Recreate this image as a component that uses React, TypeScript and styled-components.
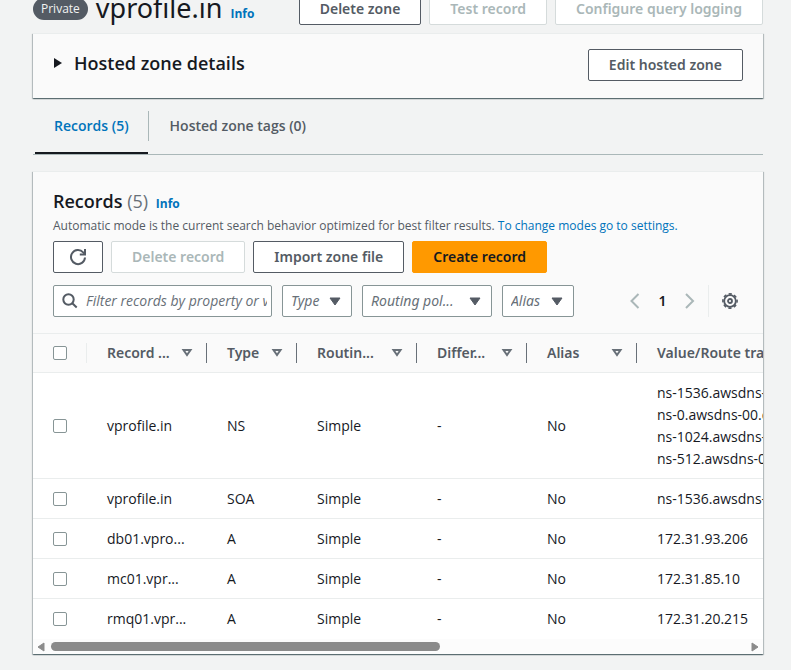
import React from "react";
import styled, { createGlobalStyle, css } from "styled-components";

const c = {
  page: "#f2f3f3",
  panel: "#fafafa",
  line: "#eaeded",
  ink: "#16191f",
  slate: "#545b64",
  grey: "#687078",
  disabled: "#aab7b8",
  disabledLine: "#d5dbdb",
  field: "#879596",
  link: "#0073bb",
};

const narrow = `"Open Sans", "Noto Sans", sans-serif`;

const GlobalStyle = createGlobalStyle`
  *, *::before, *::after { box-sizing: border-box; }
  body {
    margin: 0;
    overflow-x: hidden;
    background: ${c.page};
    color: ${c.ink};
    font: 400 14px/22px "Noto Sans", "Open Sans", sans-serif;
  }
  button, input, select { font: inherit; }
  h1, h2, p { margin: 0; }
`;

const Page = styled.main`
  padding: 0 28px 15px 33px;
`;

const ZoneHeader = styled.header`
  display: flex;
  align-items: center;
  justify-content: space-between;
  height: 32px;
  margin: -7px 0 8px;
`;

const ZoneTitle = styled.div`
  display: flex;
  align-items: center;
  gap: 8px;
`;

const Badge = styled.span`
  padding: 0 8px;
  border-radius: 11px;
  background: ${c.slate};
  color: ${c.page};
  font-family: ${narrow};
  font-size: 12px;
  line-height: 22px;
`;

const ZoneHeading = styled.div`
  display: flex;
  align-items: baseline;
  gap: 8px;
`;

const ZoneName = styled.h1`
  font-size: 27px;
  font-weight: 400;
  line-height: 28px;
`;

const Link = styled.a<{ $bold?: boolean }>`
  color: ${c.link};
  font-family: ${narrow};
  font-size: 12px;
  font-weight: ${(p) => (p.$bold ? 700 : 400)};
  text-decoration: none;
`;

const Actions = styled.div`
  display: flex;
  flex-shrink: 0;
  gap: 8px;
`;

const Button = styled.button<{ $primary?: boolean }>`
  display: inline-flex;
  align-items: center;
  justify-content: center;
  height: 32px;
  padding: 0 20px;
  border: 1px solid ${c.slate};
  border-radius: 2px;
  background: #fff;
  color: ${c.slate};
  font-weight: 600;
  white-space: nowrap;
  cursor: pointer;
  &:disabled {
    border-color: ${c.disabledLine};
    color: ${c.disabled};
    cursor: default;
  }
  ${(p) =>
    p.$primary &&
    css`
      border-color: #ff9900;
      background: #ff9900;
      color: ${c.ink};
    `}
`;

const RefreshButton = styled(Button)`
  width: 50px;
  padding: 0;
`;

const Panel = styled.section`
  background: ${c.panel};
  border-top: 1px solid ${c.line};
  box-shadow: 0 1px 1px rgba(0, 28, 36, 0.4), 1px 1px 1px rgba(0, 28, 36, 0.2),
    -1px 1px 1px rgba(0, 28, 36, 0.2);
`;

const DetailsPanel = styled(Panel)`
  display: flex;
  align-items: flex-start;
  justify-content: space-between;
  padding: 15px 20px 17px;
`;

const Expander = styled.button`
  display: flex;
  align-items: center;
  gap: 12px;
  padding: 0 0 0 1px;
  border: 0;
  background: none;
  color: ${c.ink};
  font-family: ${narrow};
  font-size: 18px;
  font-weight: 600;
  line-height: 28px;
  cursor: pointer;
`;

const Tabs = styled.div`
  display: flex;
  margin: 13px 0 16px;
  border-bottom: 1px solid ${c.disabled};
`;

const Tab = styled.button<{ $active?: boolean }>`
  display: flex;
  flex-direction: column;
  gap: 11px;
  padding: 0 0 0 2px;
  border: 0;
  background: none;
  color: ${(p) => (p.$active ? c.link : c.slate)};
  font-family: ${narrow};
  font-weight: 600;
  cursor: pointer;
  &::after {
    content: "";
    width: calc(100% - 1px);
    height: 2px;
    background: ${(p) => (p.$active ? c.ink : "transparent")};
  }
`;

const TabLabel = styled.span<{ $divided?: boolean }>`
  padding: 0 19px;
  border-right: 1px solid ${(p) => (p.$divided ? c.disabled : "transparent")};
  line-height: 30px;
`;

const RecordsHead = styled.div`
  padding: 18px 20px 16px;
`;

const Heading = styled.h2`
  font-family: ${narrow};
  font-size: 18px;
  font-weight: 600;
  line-height: 22px;
  & > a {
    margin-left: 3px;
  }
`;

const Count = styled.span`
  color: ${c.grey};
  font-weight: 400;
`;

const Description = styled.p`
  margin: 0 0 4px;
  color: ${c.slate};
  font-family: ${narrow};
  font-size: 12px;
  white-space: nowrap;
`;

const Filters = styled.div`
  display: flex;
  gap: 10px;
  margin-top: 12px;
`;

const field = css`
  display: flex;
  align-items: center;
  height: 32px;
  border: 1px solid ${c.field};
  border-radius: 2px;
  background: #fff;
`;

const SearchBox = styled.label`
  ${field}
  flex: 1;
  min-width: 0;
  gap: 8px;
  padding: 0 4px 0 8px;
  & > svg {
    flex-shrink: 0;
  }
`;

const SearchInput = styled.input`
  flex: 1;
  min-width: 0;
  padding: 0;
  border: 0;
  outline: 0;
  background: none;
  color: ${c.ink};
  font-family: ${narrow};
  &::placeholder {
    color: ${c.grey};
    font-style: italic;
    opacity: 1;
  }
`;

const SelectBox = styled.span<{ $width: number }>`
  ${field}
  flex: 0 0 ${(p) => p.$width}px;
  padding: 0 10px 0 8px;
  & > svg {
    flex-shrink: 0;
    pointer-events: none;
  }
`;

const Select = styled.select`
  flex: 1;
  min-width: 0;
  padding: 0;
  border: 0;
  outline: 0;
  appearance: none;
  background: none;
  color: ${c.grey};
  font-style: italic;
`;

const Pager = styled.nav`
  display: flex;
  align-items: center;
  margin-left: 41px;
`;

const IconButton = styled.button`
  display: flex;
  align-items: center;
  justify-content: center;
  width: 20px;
  height: 32px;
  padding: 0;
  border: 0;
  background: none;
  cursor: pointer;
`;

const PageNumber = styled.button`
  width: 35px;
  padding: 0;
  border: 0;
  background: none;
  color: ${c.ink};
  font-weight: 600;
`;

const Settings = styled.div`
  display: flex;
  margin-left: 8px;
  padding: 0 3px 0 11px;
  border-left: 1px solid ${c.line};
`;

const TableScroll = styled.div`
  overflow: hidden;
  background: #fff;
`;

const Table = styled.table`
  width: 1310px;
  border-collapse: separate;
  border-spacing: 0;
  table-layout: fixed;
`;

const Col = styled.col<{ $width?: number }>`
  width: ${(p) => (p.$width ? `${p.$width}px` : "auto")};
`;

const Th = styled.th`
  padding: 9px 0;
  border-top: 1px solid ${c.line};
  border-bottom: 1px solid ${c.line};
  background: ${c.panel};
  color: ${c.slate};
  font-weight: 600;
  text-align: left;
`;

const ThInner = styled.div<{ $faint?: boolean }>`
  display: flex;
  align-items: center;
  justify-content: space-between;
  height: 20px;
  padding: 0 13px 0 20px;
  border-right: 1px solid ${(p) => (p.$faint ? c.line : c.grey)};
  white-space: nowrap;
`;

const Td = styled.td`
  padding: 9px 20px 8px;
  border-bottom: 1px solid ${c.line};
  font-family: ${narrow};
  white-space: nowrap;
  tr:last-child > & {
    border-bottom-color: transparent;
  }
`;

const Checkbox = styled.input`
  display: block;
  width: 14px;
  height: 14px;
  margin: 0;
  appearance: none;
  border: 1px solid ${c.field};
  border-radius: 2px;
  background: #fff;
  &:checked {
    background: ${c.link};
  }
`;

const ScrollBar = styled.div`
  display: flex;
  align-items: center;
  gap: 6px;
  height: 15px;
  padding: 0 4px;
  background: #fcfcfc;
`;

const Track = styled.div`
  flex: 1;
`;

const Thumb = styled.div`
  width: 56%;
  height: 9px;
  border-radius: 5px;
  background: #8b8b8b;
`;

const ScrollArrow = ({ left }: { left?: boolean }) => (
  <svg width="8" height="10" viewBox="0 0 8 10" aria-hidden="true">
    <path d={left ? "M7 1v8L1 5z" : "M1 1v8l6-4z"} fill="#8b8b8b" stroke="#8b8b8b" strokeLinejoin="round" />
  </svg>
);

const CaretDown = () => (
  <svg width="12" height="9" viewBox="0 0 12 9" aria-hidden="true">
    <path d="M1 1h10L6 8z" fill={c.slate} stroke={c.slate} strokeLinejoin="round" />
  </svg>
);

const SortIcon = () => (
  <svg width="12" height="10" viewBox="0 0 12 10" aria-hidden="true">
    <path d="M2.5 2h7L6 7z" fill="none" stroke={c.grey} strokeWidth="2" />
  </svg>
);

const Chevron = ({ left }: { left?: boolean }) => (
  <svg width="10" height="16" viewBox="0 0 10 16" aria-hidden="true">
    <path d={left ? "M8.5 1l-7 7 7 7" : "M1 1l7 7-7 7"} fill="none" stroke={c.disabled} strokeWidth="2" />
  </svg>
);

const RefreshIcon = () => (
  <svg width="18" height="18" viewBox="0 0 18 18" fill="none" stroke={c.slate} strokeWidth="2" aria-hidden="true">
    <path d="M16 9.5A7 7 0 1 1 14.2 4.4L16 6" />
    <path d="M16 1v5.5h-5.2" />
  </svg>
);

const SearchIcon = () => (
  <svg width="16" height="16" viewBox="0 0 16 16" fill="none" stroke={c.slate} strokeWidth="2" aria-hidden="true">
    <circle cx="6.5" cy="6.5" r="5.2" />
    <path d="M10.3 10.3l4.4 4.2" />
  </svg>
);

const GearIcon = () => (
  <svg width="16" height="16" viewBox="0 0 16 16" fill="none" stroke={c.slate} aria-hidden="true">
    <circle cx="8" cy="8" r="5.8" strokeWidth="1.8" />
    <circle cx="8" cy="8" r="7.1" strokeWidth="1.6" strokeDasharray="3.2 2.376" strokeDashoffset="1.6" />
    <circle cx="8" cy="8" r="2" strokeWidth="1.8" />
  </svg>
);

const columns = [
  { label: "Record ...", width: 120 },
  { label: "Type", width: 90 },
  { label: "Routin...", width: 120 },
  { label: "Differ...", width: 110 },
  { label: "Alias", width: 110 },
];

const records = [
  {
    name: "vprofile.in",
    type: "NS",
    values: ["ns-1536.awsdns-00.co.uk.", "ns-0.awsdns-00.com.", "ns-1024.awsdns-00.org.", "ns-512.awsdns-00.net."],
  },
  { name: "vprofile.in", type: "SOA", values: ["ns-1536.awsdns-00.co.uk."] },
  { name: "db01.vpro...", type: "A", values: ["172.31.93.206"] },
  { name: "mc01.vpr...", type: "A", values: ["172.31.85.10"] },
  { name: "rmq01.vpr...", type: "A", values: ["172.31.20.215"] },
];

const filters = [
  { label: "Type", width: 70 },
  { label: "Routing pol...", width: 130 },
  { label: "Alias", width: 72 },
];

export default function App() {
  return (
    <>
      <GlobalStyle />
      <Page>
        <ZoneHeader>
          <ZoneTitle>
            <Badge>Private</Badge>
            <ZoneHeading>
              <ZoneName>vprofile.in</ZoneName>
              <Link $bold href="#zone-info">Info</Link>
            </ZoneHeading>
          </ZoneTitle>
          <Actions>
            <Button>Delete zone</Button>
            <Button disabled>Test record</Button>
            <Button disabled>Configure query logging</Button>
          </Actions>
        </ZoneHeader>

        <DetailsPanel>
          <Expander aria-expanded="false">
            <svg width="8" height="10" viewBox="0 0 8 10" aria-hidden="true">
              <path d="M0 0v10l8-5z" fill={c.ink} />
            </svg>
            Hosted zone details
          </Expander>
          <Button>Edit hosted zone</Button>
        </DetailsPanel>

        <Tabs role="tablist">
          <Tab role="tab" aria-selected="true" $active>
            <TabLabel $divided>Records (5)</TabLabel>
          </Tab>
          <Tab role="tab" aria-selected="false">
            <TabLabel>Hosted zone tags (0)</TabLabel>
          </Tab>
        </Tabs>

        <Panel>
          <RecordsHead>
            <Heading>
              Records <Count>(5)</Count> <Link $bold href="#records-info">Info</Link>
            </Heading>
            <Description>
              Automatic mode is the current search behavior optimized for best filter results.{" "}
              <Link href="#settings">To change modes go to settings.</Link>
            </Description>
            <Actions>
              <RefreshButton aria-label="Refresh"><RefreshIcon /></RefreshButton>
              <Button disabled>Delete record</Button>
              <Button>Import zone file</Button>
              <Button $primary>Create record</Button>
            </Actions>
            <Filters>
              <SearchBox>
                <SearchIcon />
                <SearchInput aria-label="Filter records" placeholder="Filter records by property or value" />
              </SearchBox>
              {filters.map((f) => (
                <SelectBox key={f.label} $width={f.width}>
                  <Select aria-label={f.label}>
                    <option>{f.label}</option>
                  </Select>
                  <CaretDown />
                </SelectBox>
              ))}
              <Pager aria-label="Pagination">
                <IconButton aria-label="Previous page"><Chevron left /></IconButton>
                <PageNumber aria-current="page">1</PageNumber>
                <IconButton aria-label="Next page"><Chevron /></IconButton>
                <Settings>
                  <IconButton aria-label="Preferences"><GearIcon /></IconButton>
                </Settings>
              </Pager>
            </Filters>
          </RecordsHead>

          <TableScroll>
            <Table>
              <colgroup>
                <Col $width={54} />
                {columns.map((col) => <Col key={col.label} $width={col.width} />)}
                <Col />
              </colgroup>
              <thead>
                <tr>
                  <Th>
                    <ThInner $faint><Checkbox type="checkbox" aria-label="Select all records" /></ThInner>
                  </Th>
                  {columns.map((col) => (
                    <Th key={col.label}>
                      <ThInner>{col.label}<SortIcon /></ThInner>
                    </Th>
                  ))}
                  <Th><ThInner>Value/Route traffic to</ThInner></Th>
                </tr>
              </thead>
              <tbody>
                {records.map((r) => (
                  <tr key={r.name + r.type}>
                    <Td><Checkbox type="checkbox" aria-label={`Select ${r.name} ${r.type}`} /></Td>
                    <Td>{r.name}</Td>
                    <Td>{r.type}</Td>
                    <Td>Simple</Td>
                    <Td>-</Td>
                    <Td>No</Td>
                    <Td>{r.values.map((v) => <div key={v}>{v}</div>)}</Td>
                  </tr>
                ))}
              </tbody>
            </Table>
          </TableScroll>
          <ScrollBar aria-hidden="true">
            <ScrollArrow left />
            <Track><Thumb /></Track>
            <ScrollArrow />
          </ScrollBar>
        </Panel>
      </Page>
    </>
  );
}
